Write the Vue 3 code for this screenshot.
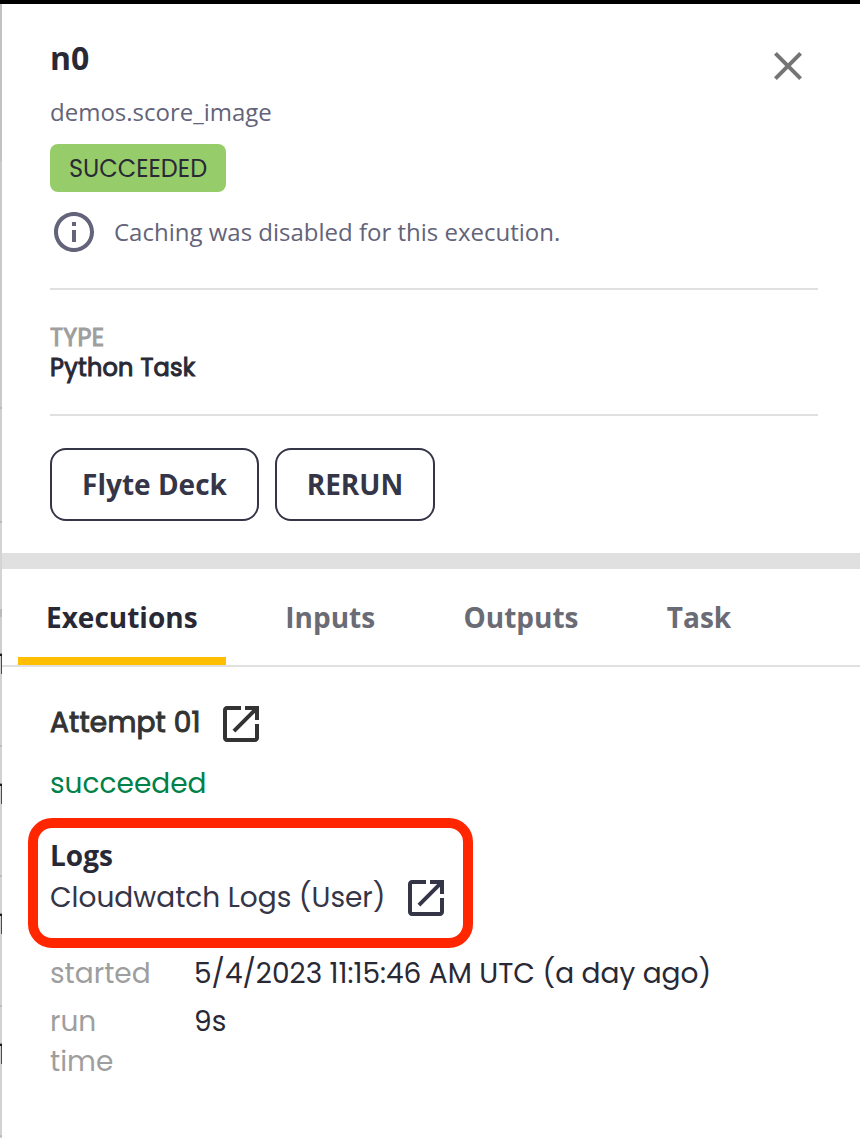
<script setup>
const tabs = ['Executions', 'Inputs', 'Outputs', 'Task']
const rows = [0, 1, 2, 3]
</script>

<template>
  <div class="page">
    <aside class="backdrop">
      <i v-for="row in rows" :key="row" class="row-edge"></i>
    </aside>
    <main class="panel">
      <header class="head">
        <div class="title-row">
          <h1>n0</h1>
          <svg class="icon close" viewBox="0 0 24 24"><path d="M19 6.41L17.59 5 12 10.59 6.41 5 5 6.41 10.59 12 5 17.59 6.41 19 12 13.41 17.59 19 19 17.59 13.41 12z" /></svg>
        </div>
        <div class="subtitle">demos.score_image</div>
        <div class="badge">SUCCEEDED</div>
        <div class="cache">
          <svg class="icon" viewBox="0 0 24 24"><path d="M11 7h2v2h-2zm0 4h2v6h-2zm1-9C6.48 2 2 6.48 2 12s4.48 10 10 10 10-4.48 10-10S17.52 2 12 2zm0 18c-4.41 0-8-3.59-8-8s3.59-8 8-8 8 3.59 8 8-3.59 8-8 8z" /></svg>
          <span>Caching was disabled for this execution.</span>
        </div>
        <section class="type">
          <div class="type-label">TYPE</div>
          <div class="type-value">Python Task</div>
        </section>
        <div class="actions">
          <button class="deck">Flyte Deck</button>
          <button class="rerun">RERUN</button>
        </div>
      </header>
      <nav class="tabs">
        <div v-for="(tab, i) in tabs" :key="tab" class="tab" :class="{ active: i === 0 }">{{ tab }}</div>
      </nav>
      <section class="body">
        <div class="attempt">
          <span>Attempt 01</span>
          <svg class="icon" viewBox="0 0 24 24"><path d="M19 19H5V5h7V3H5c-1.11 0-2 .9-2 2v14c0 1.1.89 2 2 2h14c1.1 0 2-.9 2-2v-7h-2v7zM14 3v2h3.59l-9.83 9.83 1.41 1.41L19 6.41V10h2V3h-7z" /></svg>
        </div>
        <div class="status">succeeded</div>
        <div class="logs">
          <h2>Logs</h2>
          <div class="log-link">
            <span>Cloudwatch Logs (User)</span>
            <svg class="icon" viewBox="0 0 24 24"><path d="M19 19H5V5h7V3H5c-1.11 0-2 .9-2 2v14c0 1.1.89 2 2 2h14c1.1 0 2-.9 2-2v-7h-2v7zM14 3v2h3.59l-9.83 9.83 1.41 1.41L19 6.41V10h2V3h-7z" /></svg>
          </div>
        </div>
        <dl class="details">
          <dt>started</dt>
          <dd>5/4/2023 11:15:46 AM UTC (a day ago)</dd>
          <dt>run<br />time</dt>
          <dd>9s</dd>
        </dl>
      </section>
    </main>
  </div>
</template>

<style>
body {
  background: #fff;
}
</style>

<style scoped>
* {
  box-sizing: border-box;
}
.page {
  display: flex;
  width: 860px;
  height: 1138px;
  overflow: hidden;
  border-top: 4px solid #000;
  font-family: Poppins, Inter, "Open Sans", sans-serif;
  white-space: nowrap;
  color: #292936;
}
.backdrop {
  flex: none;
  width: 2px;
  padding-top: 649px;
  background: linear-gradient(
    #c2c2c2 0 157px, #cacaca 157px 403px, #b8b8b8 403px 405px,
    #cfcfcf 405px 517px, #b8b8b8 517px 519px, #d4d4d4 519px 605px,
    #bababa 605px 613px, #cecece 613px 649px, #d2d2d2 649px
  );
}
.row-edge {
  display: block;
  height: 130px;
  background:
    linear-gradient(#8f8f96 0 1px, #191926 1px 3px, transparent 3px),
    linear-gradient(#4a4a52, #4a4a52) 1px 3px / 1px 18px no-repeat,
    linear-gradient(transparent 92px, #bcbcbc 92px 94px, transparent 94px);
}
.panel {
  flex: 1;
  min-width: 0;
}
h1, h2, dl, dd {
  margin: 0;
}
.icon {
  flex: none;
  display: block;
  width: 48px;
  height: 48px;
  fill: currentColor;
}
.head {
  height: 565px;
  padding: 36px 42px 0 48px;
  border-bottom: 16px solid #e0e0e0;
}
.title-row {
  display: flex;
  justify-content: space-between;
  height: 52px;
}
h1 {
  font: 700 32px/36px "Open Sans", sans-serif;
}
.close {
  margin: 2px 6px 0 0;
  color: #757575;
}
.subtitle {
  height: 48px;
  font: 24px/40px "Open Sans", sans-serif;
  color: #636379;
}
.badge {
  display: flex;
  justify-content: center;
  margin-top: 4px;
  width: 176px;
  height: 48px;
  border-radius: 8px;
  background: #97cc6a;
  font-size: 24px;
  line-height: 50px;
}
.cache {
  display: flex;
  align-items: center;
  gap: 16px;
  margin-top: 16px;
  font: 24px/48px "Open Sans", sans-serif;
  color: #636379;
}
.type {
  margin-top: 32px;
  height: 128px;
  padding-top: 33px;
  border-top: 2px solid #e0e0e0;
  border-bottom: 2px solid #e0e0e0;
  font-size: 24px;
  line-height: 30px;
  letter-spacing: 0.25px;
  -webkit-text-stroke: 1px currentColor;
}
.type-label {
  color: #9e9e9e;
}
.actions {
  display: flex;
  gap: 16px;
  margin-top: 32px;
}
button {
  height: 73px;
  padding: 0;
  border: 2px solid #353548;
  border-radius: 16px;
  background: #fff;
  color: #353548;
  font: 700 28px/69px "Open Sans", sans-serif;
}
.deck {
  width: 209px;
}
.rerun {
  width: 160px;
}
.tabs {
  display: flex;
  gap: 30.3px;
  height: 98px;
  padding-left: 16px;
  border-bottom: 2px solid #e0e0e0;
  font: 700 28px/97px "Open Sans", sans-serif;
  color: #6b6b76;
}
.tab {
  height: 96px;
  padding: 0 29px;
}
.tab.active {
  width: 208px;
  padding: 0 28px;
  border-bottom: 8px solid #ffbf00;
  color: #292936;
}
.body {
  padding: 33px 42px 0 48px;
  font-size: 28px;
  line-height: 40px;
}
.attempt {
  display: flex;
  gap: 16px;
  height: 48px;
  color: #333;
}
.attempt span {
  line-height: 46px;
  letter-spacing: 0.2px;
  -webkit-text-stroke: 1px currentColor;
}
.status {
  margin-top: 16px;
  color: #008148;
}
.logs {
  position: relative;
  margin-top: 31px;
}
.logs::after {
  content: "";
  position: absolute;
  left: -22px;
  top: -17px;
  box-sizing: border-box;
  width: 445px;
  height: 130px;
  border: 10px solid #ff2600;
  border-radius: 24px;
}
h2 {
  font: 700 28px/41px "Open Sans", sans-serif;
}
.log-link {
  display: flex;
  gap: 16px;
  height: 78px;
  color: #353548;
  line-height: 43px;
}
.log-link .icon {
  margin-top: -2px;
}
.details {
  display: grid;
  grid-template-columns: 144px 1fr;
  row-gap: 8px;
}
dt {
  color: #9e9e9e;
}
</style>
